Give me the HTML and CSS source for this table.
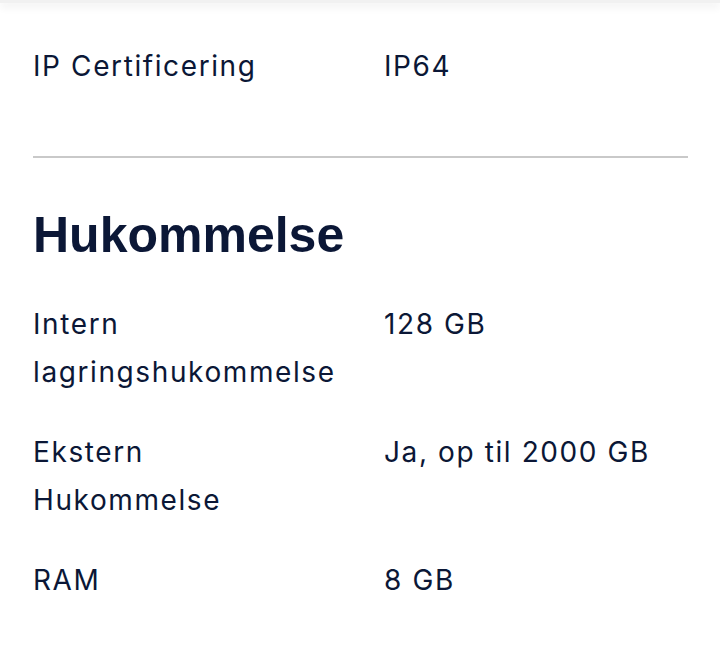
FILE: index.html
```html
<!DOCTYPE html>
<html lang="da">
<head>
    <meta charset="UTF-8">
    <meta name="viewport" content="width=device-width, initial-scale=1.0">
    <title>Specifikationer</title>
    <link rel="stylesheet" href="styles.css">
</head>
<body>
    <div class="topbar"></div>
    <div class="container">
        <div class="spec-list first">
            <div class="spec-row">
                <div class="spec-label">IP Certificering</div>
                <div class="spec-value">IP64</div>
            </div>
        </div>
        <hr class="divider">
        <h2 class="section-title">Hukommelse</h2>
        <div class="spec-list">
            <div class="spec-row">
                <div class="spec-label">Intern lagringshukommelse</div>
                <div class="spec-value">128 GB</div>
            </div>
            <div class="spec-row">
                <div class="spec-label">Ekstern Hukommelse</div>
                <div class="spec-value">Ja, op til 2000 GB</div>
            </div>
            <div class="spec-row">
                <div class="spec-label">RAM</div>
                <div class="spec-value">8 GB</div>
            </div>
        </div>
    </div>
</body>
</html>
```

FILE: styles.css
```css
body {
    margin: 0;
    padding: 0;
    background-color: #fff;
    color: #0b1736;
    font-family: Inter, "Noto Sans", sans-serif;
    overflow: hidden;
}
.topbar {
    height: 3px;
    background-color: #f1f1f1;
    box-shadow: 0 3px 9px rgba(0, 0, 0, 0.12);
}
.container {
    padding: 0 32px 0 33px;
}
.spec-list {
    display: flex;
    flex-direction: column;
    gap: 32px;
}
.spec-list.first {
    padding-top: 39px;
}
.spec-row {
    display: grid;
    grid-template-columns: 351px 1fr;
    font-size: 28px;
    line-height: 48px;
    letter-spacing: 1.6px;
}
.spec-label {
    padding-right: 50px;
}
.divider {
    border: none;
    height: 2px;
    background-color: #c9c9c9;
    margin: 66px 0 0;
}
.section-title {
    font-family: "Liberation Sans", Arial, sans-serif;
    font-weight: bold;
    font-size: 50px;
    line-height: 60px;
    margin: 47px 0 35px;
}
```
